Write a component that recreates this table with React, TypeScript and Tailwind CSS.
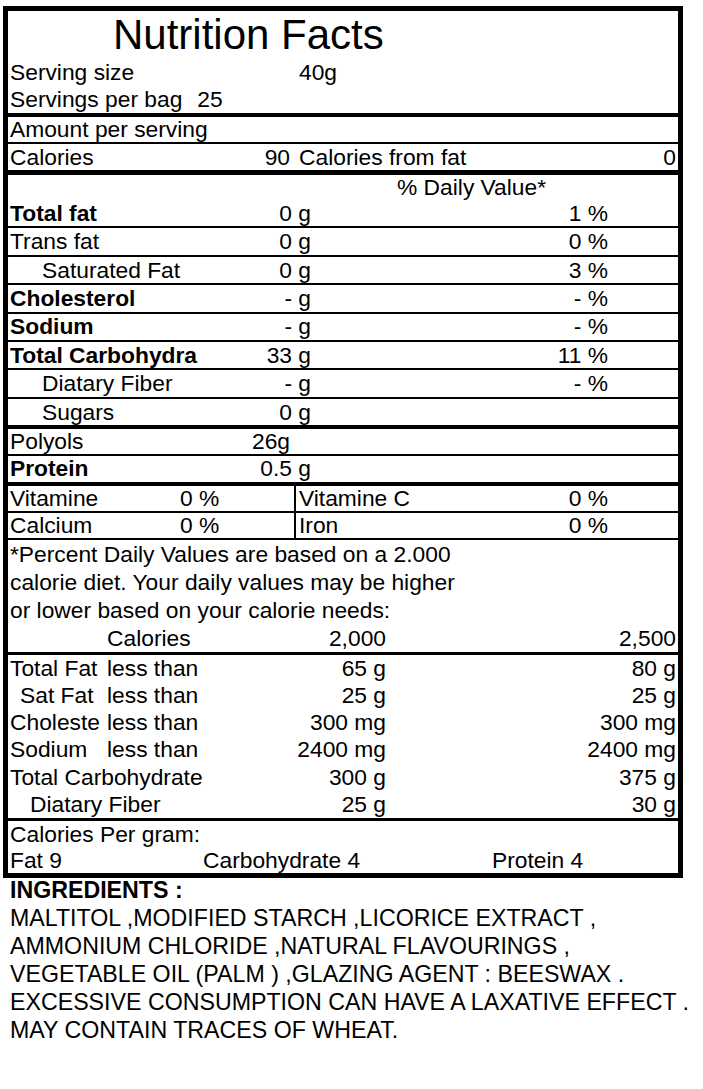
const font = { fontFamily: '"Liberation Sans", Arial, sans-serif' };

function NutrientRow({
  label,
  value,
  pct,
  bold,
  indent,
  last,
}: {
  label: string;
  value: string;
  pct?: string;
  bold?: boolean;
  indent?: boolean;
  last?: boolean;
}) {
  return (
    <div
      className={`flex h-[26.4px] items-center border-black box-content ${
        last ? "border-b-4" : "border-b-2"
      }`}
    >
      <div className="flex w-[303px] justify-between pl-[2px]">
        <span className={`${bold ? "font-bold" : ""} ${indent ? "pl-[32px]" : ""}`}>{label}</span>
        <span>{value}</span>
      </div>
      <div className="w-[297px] text-right">{pct}</div>
    </div>
  );
}

function LimitRow({ label, less, a, b, labelClass }: { label: string; less?: string; a: string; b: string; labelClass?: string }) {
  return (
    <div className="flex h-[27.2px] items-center whitespace-nowrap pl-[2px] pr-[2px]">
      <span className={`w-[97px] ${labelClass ?? ""}`}>{label}</span>
      <span className="w-[150px]">{less}</span>
      <span className="w-[129px] text-right">{a}</span>
      <span className="flex-1 text-right">{b}</span>
    </div>
  );
}

export default function App() {
  return (
    <div className="min-h-[1089px] w-[703px] bg-white text-black text-[22.8px] leading-none" style={font}>
      <div className="ml-[3px] mt-[6px] w-[680px] border-[5px] border-black">
        {/* header */}
        <div className="h-[48px] pl-[105px] text-[42px] leading-[48px]">Nutrition Facts</div>
        <div className="flex h-[27px] items-center pl-[2px]">
          <span className="w-[289px]">Serving size</span>
          <span>40g</span>
        </div>
        <div className="flex h-[27px] items-center border-b-4 border-black pl-[2px] box-content">
          <span>Servings per bag</span>
          <span className="ml-[15px]">25</span>
        </div>
        <div className="flex h-[25px] items-center border-b-2 border-black pl-[2px] box-content">Amount per serving</div>
        <div className="flex h-[26px] items-center border-b-[5px] border-black pl-[2px] pr-[2px] box-content">
          <span className="flex w-[280px] justify-between">
            <span>Calories</span>
            <span>90</span>
          </span>
          <span className="ml-[9px]">Calories from fat</span>
          <span className="flex-1 text-right">0</span>
        </div>

        {/* nutrients */}
        <div className="flex h-[25px] items-center pl-[389px]">% Daily Value*</div>
        <NutrientRow label="Total fat" value="0 g" pct="1 %" bold />
        <NutrientRow label="Trans fat" value="0 g" pct="0 %" />
        <NutrientRow label="Saturated Fat" value="0 g" pct="3 %" indent />
        <NutrientRow label="Cholesterol" value="- g" pct="- %" bold />
        <NutrientRow label="Sodium" value="- g" pct="- %" bold />
        <NutrientRow label="Total Carbohydra" value="33 g" pct="11 %" bold />
        <NutrientRow label="Diatary Fiber" value="- g" pct="- %" indent />
        <NutrientRow label="Sugars" value="0 g" indent last />
        <div className="flex h-[24.5px] items-center border-b-2 border-black pl-[2px] box-content">
          <span className="flex w-[280px] justify-between">
            <span>Polyols</span>
            <span>26g</span>
          </span>
        </div>
        <div className="flex h-[26.5px] items-center border-b-4 border-black pl-[2px] box-content">
          <span className="flex w-[301px] justify-between">
            <span className="font-bold">Protein</span>
            <span>0.5 g</span>
          </span>
        </div>

        {/* vitamins */}
        <div className="flex h-[24.5px] border-b-2 border-black box-content">
          <div className="flex w-[288px] items-center border-r-2 border-black pl-[2px]">
            <span className="w-[170px]">Vitamine</span>
            <span>0 %</span>
          </div>
          <div className="flex w-[312px] items-center justify-between pl-[3px]">
            <span>Vitamine C</span>
            <span>0 %</span>
          </div>
        </div>
        <div className="flex h-[25px] border-b-2 border-black box-content">
          <div className="flex w-[288px] items-center border-r-2 border-black pl-[2px]">
            <span className="w-[170px]">Calcium</span>
            <span>0 %</span>
          </div>
          <div className="flex w-[312px] items-center justify-between pl-[3px]">
            <span>Iron</span>
            <span>0 %</span>
          </div>
        </div>

        {/* footnote */}
        <div className="border-b-[3px] border-black pl-[2px] pr-[2px] leading-[28px]">
          <div>*Percent Daily Values are based on a 2.000</div>
          <div>calorie diet. Your daily values may be higher</div>
          <div>or lower based on your calorie needs:</div>
          <div className="flex">
            <span className="w-[97px]" />
            <span className="w-[150px]">Calories</span>
            <span className="w-[129px] text-right">2,000</span>
            <span className="flex-1 text-right">2,500</span>
          </div>
        </div>
        <div className="border-b-[3px] border-black">
          <LimitRow label="Total Fat" less="less than" a="65 g" b="80 g" />
          <LimitRow label="Sat Fat" less="less than" a="25 g" b="25 g" labelClass="pl-[10px]" />
          <LimitRow label="Choleste" less="less than" a="300 mg" b="300 mg" />
          <LimitRow label="Sodium" less="less than" a="2400 mg" b="2400 mg" />
          <LimitRow label="Total Carbohydrate" a="300 g" b="375 g" />
          <LimitRow label="Diatary Fiber" a="25 g" b="30 g" labelClass="pl-[20px]" />
        </div>
        <div className="pl-[2px] leading-[26px]">
          <div>Calories Per gram:</div>
          <div className="flex">
            <span className="w-[193px]">Fat 9</span>
            <span className="w-[289px]">Carbohydrate 4</span>
            <span>Protein 4</span>
          </div>
        </div>
      </div>

      {/* ingredients */}
      <div className="-mt-[2px] whitespace-nowrap pl-[10px] text-[23.2px] leading-[28px]">
        <div className="font-bold">INGREDIENTS :</div>
        <div>MALTITOL ,MODIFIED STARCH ,LICORICE EXTRACT ,</div>
        <div>AMMONIUM CHLORIDE ,NATURAL FLAVOURINGS ,</div>
        <div>VEGETABLE OIL (PALM ) ,GLAZING AGENT : BEESWAX .</div>
        <div>EXCESSIVE CONSUMPTION CAN HAVE A LAXATIVE EFFECT .</div>
        <div>MAY CONTAIN TRACES OF WHEAT.</div>
      </div>
    </div>
  );
}
